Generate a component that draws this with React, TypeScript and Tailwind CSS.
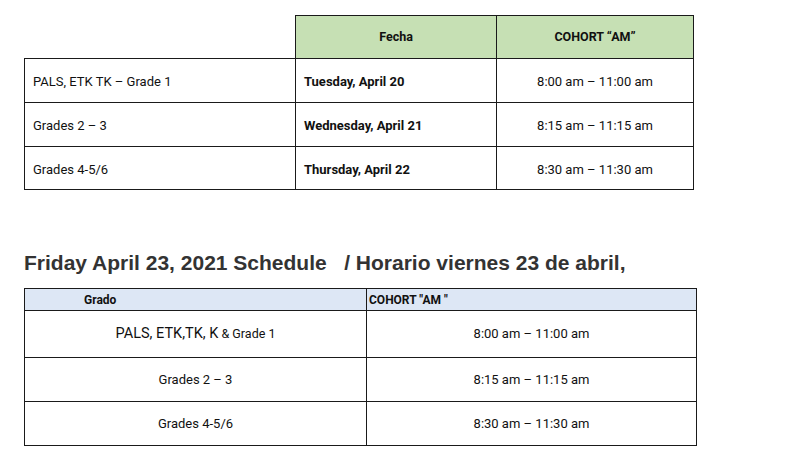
import React from "react";

export default function App() {
  const rows1 = [
    ["PALS, ETK TK – Grade 1", "Tuesday, April 20", "8:00 am – 11:00 am"],
    ["Grades 2 – 3", "Wednesday, April 21", "8:15 am – 11:15 am"],
    ["Grades 4-5/6", "Thursday, April 22", "8:30 am – 11:30 am"],
  ];
  const times = ["8:00 am – 11:00 am", "8:15 am – 11:15 am", "8:30 am – 11:30 am"];
  const rowH2 = ["h-[47px]", "h-[44px]", "h-[44px]"];
  const cell = "border border-[#1a1a1a]";
  return (
    <div className="w-[800px] h-[466px] bg-white font-['Roboto',sans-serif] text-[13px] text-[#111] overflow-hidden">
      <div className="pl-[24px] pt-[15px]">
        <table className="border-collapse table-fixed w-[669px]">
          <colgroup>
            <col className="w-[271px]" />
            <col className="w-[201px]" />
            <col className="w-[197px]" />
          </colgroup>
          <thead>
            <tr className="h-[43px]">
              <th className="border-b border-[#1a1a1a]"></th>
              <th className={`${cell} bg-[#c6e0b4] font-bold text-[12.5px] text-center`}>Fecha</th>
              <th className={`${cell} bg-[#c6e0b4] font-bold text-[12.5px] text-center`}>COHORT “AM”</th>
            </tr>
          </thead>
          <tbody>
            {rows1.map((r, i) => (
              <tr key={i} className={i === 2 ? "h-[43px]" : "h-[44px]"}>
                <td className={`${cell} pl-[8px] pt-[3px]`}>{r[0]}</td>
                <td className={`${cell} pl-[8px] pt-[3px] font-bold`}>{r[1]}</td>
                <td className={`${cell} pt-[3px] text-center`}>{r[2]}</td>
              </tr>
            ))}
          </tbody>
        </table>
      </div>

      <h2 className="mt-[61px] pl-[24px] font-['Liberation_Sans',Arial,sans-serif] font-bold text-[21px] leading-[24px] text-[#333] whitespace-pre">
        {"Friday April 23, 2021 Schedule   / Horario viernes 23 de abril,"}
      </h2>

      <div className="pl-[24px] pt-[13px]">
        <table className="border-collapse table-fixed w-[672px]">
          <colgroup>
            <col className="w-[342px]" />
            <col className="w-[330px]" />
          </colgroup>
          <thead>
            <tr className="h-[22px] bg-[#dde7f5]">
              <th className={`${cell} font-bold text-[12px] text-left pl-[59px]`}>Grado</th>
              <th className={`${cell} font-bold text-[12px] text-left pl-[2px]`}>COHORT "AM "</th>
            </tr>
          </thead>
          <tbody>
            {times.map((t, i) => (
              <tr key={i} className={rowH2[i]}>
                <td className={`${cell} text-center`}>
                  {i === 0 ? (
                    <span>
                      <span className="text-[14.5px]">PALS, ETK,TK, K</span>
                      <span className="text-[12.5px]"> &amp; Grade 1</span>
                    </span>
                  ) : i === 1 ? (
                    "Grades 2 – 3"
                  ) : (
                    "Grades 4-5/6"
                  )}
                </td>
                <td className={`${cell} text-center`}>{t}</td>
              </tr>
            ))}
          </tbody>
        </table>
      </div>
    </div>
  );
}
